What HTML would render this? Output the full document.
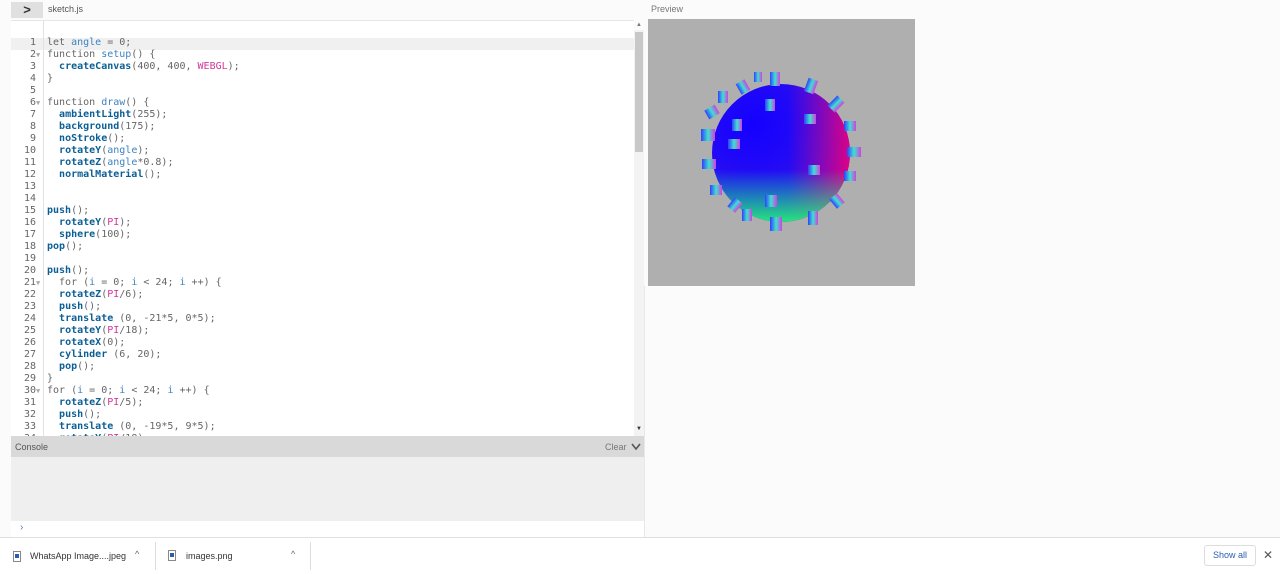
<!DOCTYPE html>
<html><head><style>
body{margin:0;width:1280px;height:573px;background:#fbfbfb;font-family:"Liberation Sans",sans-serif;position:relative;overflow:hidden}
.abs{position:absolute}
.code{position:absolute;left:11px;top:20px;width:623px;height:416px;background:#fff;border-top:1px solid #e6e6e6;overflow:hidden}
.gut{position:absolute;left:0;top:0;width:32px;height:416px;border-right:1px solid #e2e2e2}
.ln{position:absolute;left:0;width:32px;font:10px/12px "DejaVu Sans Mono","Liberation Mono",monospace;color:#666;white-space:pre}
.lines{position:absolute;left:36px;top:16px;font:10px/12px "DejaVu Sans Mono","Liberation Mono",monospace;color:#666;white-space:pre}
.f{color:#0b5f95;font-weight:bold}
.v{color:#3f82c1}
.p{color:#d1389a}
</style></head><body>
<div class="abs" style="left:11px;top:2px;width:32px;height:16px;background:#e0e0e0;text-align:center;font-size:13px;line-height:16px;color:#333;font-weight:bold">&gt;</div>
<div class="abs" style="left:48px;top:4px;font-size:9px;color:#555">sketch.js</div>
<div class="abs" style="left:651px;top:4px;font-size:9px;color:#777">Preview</div>
<div class="code">
<div class="abs" style="left:0;top:17px;width:623px;height:12px;background:#f0f0f0"></div>
<div class="gut"></div>
<div class="ln" style="top:16px;text-align:right;width:25px">1
2
3
4
5
6
7
8
9
10
11
12
13
14
15
16
17
18
19
20
21
22
23
24
25
26
27
28
29
30
31
32
33
34</div>
<div class="ln" style="top:16px;left:25px;font-size:7px;color:#aaa">
▼



▼














▼








▼</div>
<div class="lines">let <span class="v">angle</span> = 0;
function <span class="v">setup</span>() {
  <span class="f">createCanvas</span>(400, 400, <span class="p">WEBGL</span>);
}

function <span class="v">draw</span>() {
  <span class="f">ambientLight</span>(255);
  <span class="f">background</span>(175);
  <span class="f">noStroke</span>();
  <span class="f">rotateY</span>(<span class="v">angle</span>);
  <span class="f">rotateZ</span>(<span class="v">angle</span>*0.8);
  <span class="f">normalMaterial</span>();


<span class="f">push</span>();
  <span class="f">rotateY</span>(<span class="p">PI</span>);
  <span class="f">sphere</span>(100);
<span class="f">pop</span>();

<span class="f">push</span>();
  for (<span class="v">i</span> = 0; <span class="v">i</span> &lt; 24; <span class="v">i</span> ++) {
  <span class="f">rotateZ</span>(<span class="p">PI</span>/6);
  <span class="f">push</span>();
  <span class="f">translate</span> (0, -21*5, 0*5);
  <span class="f">rotateY</span>(<span class="p">PI</span>/18);
  <span class="f">rotateX</span>(0);
  <span class="f">cylinder</span> (6, 20);
  <span class="f">pop</span>();
}
for (<span class="v">i</span> = 0; <span class="v">i</span> &lt; 24; <span class="v">i</span> ++) {
  <span class="f">rotateZ</span>(<span class="p">PI</span>/5);
  <span class="f">push</span>();
  <span class="f">translate</span> (0, -19*5, 9*5);
  <span class="f">rotateY</span>(<span class="p">PI</span>/18);</div>
</div>
<div class="abs" style="left:634px;top:30px;width:10px;height:406px;background:#f3f3f3"></div>
<div class="abs" style="left:635px;top:32px;width:8px;height:120px;background:#c8c8c8"></div>
<div class="abs" style="left:636px;top:22px;font-size:6px;color:#777">▲</div>
<div class="abs" style="left:636px;top:426px;font-size:6px;color:#333">▼</div>
<div class="abs" style="left:11px;top:436px;width:633px;height:21px;background:#d9d9d9"></div>
<div class="abs" style="left:15px;top:442px;font-size:9px;color:#555">Console</div>
<div class="abs" style="left:605px;top:442px;font-size:9px;color:#777">Clear</div>
<svg class="abs" style="left:631px;top:443px" width="10" height="8"><path d="M1 1 L5 6 L9 1" stroke="#555" stroke-width="1.6" fill="none"/></svg>
<div class="abs" style="left:11px;top:457px;width:633px;height:64px;background:#efefef"></div>
<div class="abs" style="left:11px;top:521px;width:633px;height:16px;background:#fff"></div>
<div class="abs" style="left:20px;top:522px;font-size:10px;color:#3f82c1">›</div>
<div class="abs" style="left:644px;top:286px;width:1px;height:251px;background:#e8e8e8"></div>
<svg class="abs" style="left:648px;top:19px" width="267" height="267">
<defs>
<radialGradient id="g1" cx="0.3" cy="0.3" r="0.9"><stop offset="0" stop-color="#1400ff"/><stop offset="0.6" stop-color="#2a10f0"/><stop offset="1" stop-color="#7000d0"/></radialGradient>
<linearGradient id="g2" x1="0" y1="0" x2="1" y2="0"><stop offset="0.55" stop-color="#e0007a" stop-opacity="0"/><stop offset="1" stop-color="#ff0070" stop-opacity="0.8"/></linearGradient>
<linearGradient id="g3" x1="0" y1="0" x2="0" y2="1"><stop offset="0.62" stop-color="#00ff90" stop-opacity="0"/><stop offset="1" stop-color="#20ff70" stop-opacity="0.9"/></linearGradient>
<linearGradient id="c" x1="0" y1="0" x2="1" y2="0"><stop offset="0" stop-color="#3040ff"/><stop offset="0.5" stop-color="#40e0d0"/><stop offset="1" stop-color="#d040e0"/></linearGradient>
</defs>
<rect width="267" height="267" fill="#afafaf"/>
<circle cx="133" cy="134" r="69" fill="url(#g1)"/>
<circle cx="133" cy="134" r="69" fill="url(#g2)"/>
<circle cx="133" cy="134" r="69" fill="url(#g3)"/>
<g fill="url(#c)">
<rect x="122" y="53" width="10" height="14"/><rect x="158" y="60" width="10" height="14" transform="rotate(20 163 67)"/>
<rect x="183" y="78" width="10" height="14" transform="rotate(45 188 85)"/><rect x="196" y="102" width="12" height="10"/>
<rect x="199" y="128" width="14" height="10"/><rect x="196" y="152" width="12" height="10"/>
<rect x="184" y="176" width="10" height="12" transform="rotate(-40 189 182)"/><rect x="160" y="192" width="10" height="14"/>
<rect x="122" y="198" width="12" height="14"/><rect x="94" y="190" width="10" height="12"/>
<rect x="82" y="180" width="10" height="12" transform="rotate(40 87 186)"/><rect x="62" y="166" width="12" height="10"/>
<rect x="54" y="140" width="14" height="10"/><rect x="53" y="110" width="14" height="12"/>
<rect x="58" y="88" width="12" height="10" transform="rotate(-30 64 93)"/><rect x="70" y="72" width="10" height="12"/>
<rect x="90" y="62" width="10" height="12" transform="rotate(-30 95 68)"/><rect x="106" y="53" width="8" height="10"/>
<rect x="117" y="80" width="10" height="12"/><rect x="156" y="95" width="12" height="10"/>
<rect x="80" y="120" width="12" height="10"/><rect x="160" y="146" width="12" height="10"/>
<rect x="117" y="176" width="12" height="12"/><rect x="84" y="100" width="10" height="12"/>
</g>
</svg>
<div class="abs" style="left:0;top:537px;width:1280px;height:36px;background:#fff;border-top:1px solid #e0e0e0"></div>
<div class="abs" style="left:13px;top:551px;width:6px;height:9px;border:1px solid #888;background:#fff"><div style="margin:2px 1px;width:4px;height:4px;background:#2a5db0"></div></div>
<div class="abs" style="left:30px;top:551px;font-size:9px;color:#333">WhatsApp Image....jpeg</div>
<div class="abs" style="left:135px;top:549px;font-size:9px;color:#666">^</div>
<div class="abs" style="left:155px;top:542px;width:1px;height:28px;background:#ddd"></div>
<div class="abs" style="left:168px;top:550px;width:6px;height:9px;border:1px solid #888;background:#fff"><div style="margin:2px 1px;width:4px;height:4px;background:#2a5db0"></div></div>
<div class="abs" style="left:186px;top:551px;font-size:9px;color:#333">images.png</div>
<div class="abs" style="left:291px;top:549px;font-size:9px;color:#666">^</div>
<div class="abs" style="left:310px;top:542px;width:1px;height:28px;background:#ddd"></div>
<div class="abs" style="left:1204px;top:545px;width:50px;height:19px;border:1px solid #ddd;border-radius:3px;background:#fff;text-align:center;font-size:9px;line-height:19px;color:#2a5db0">Show all</div>
<div class="abs" style="left:1263px;top:548px;font-size:12px;color:#555">✕</div>
</body></html>
